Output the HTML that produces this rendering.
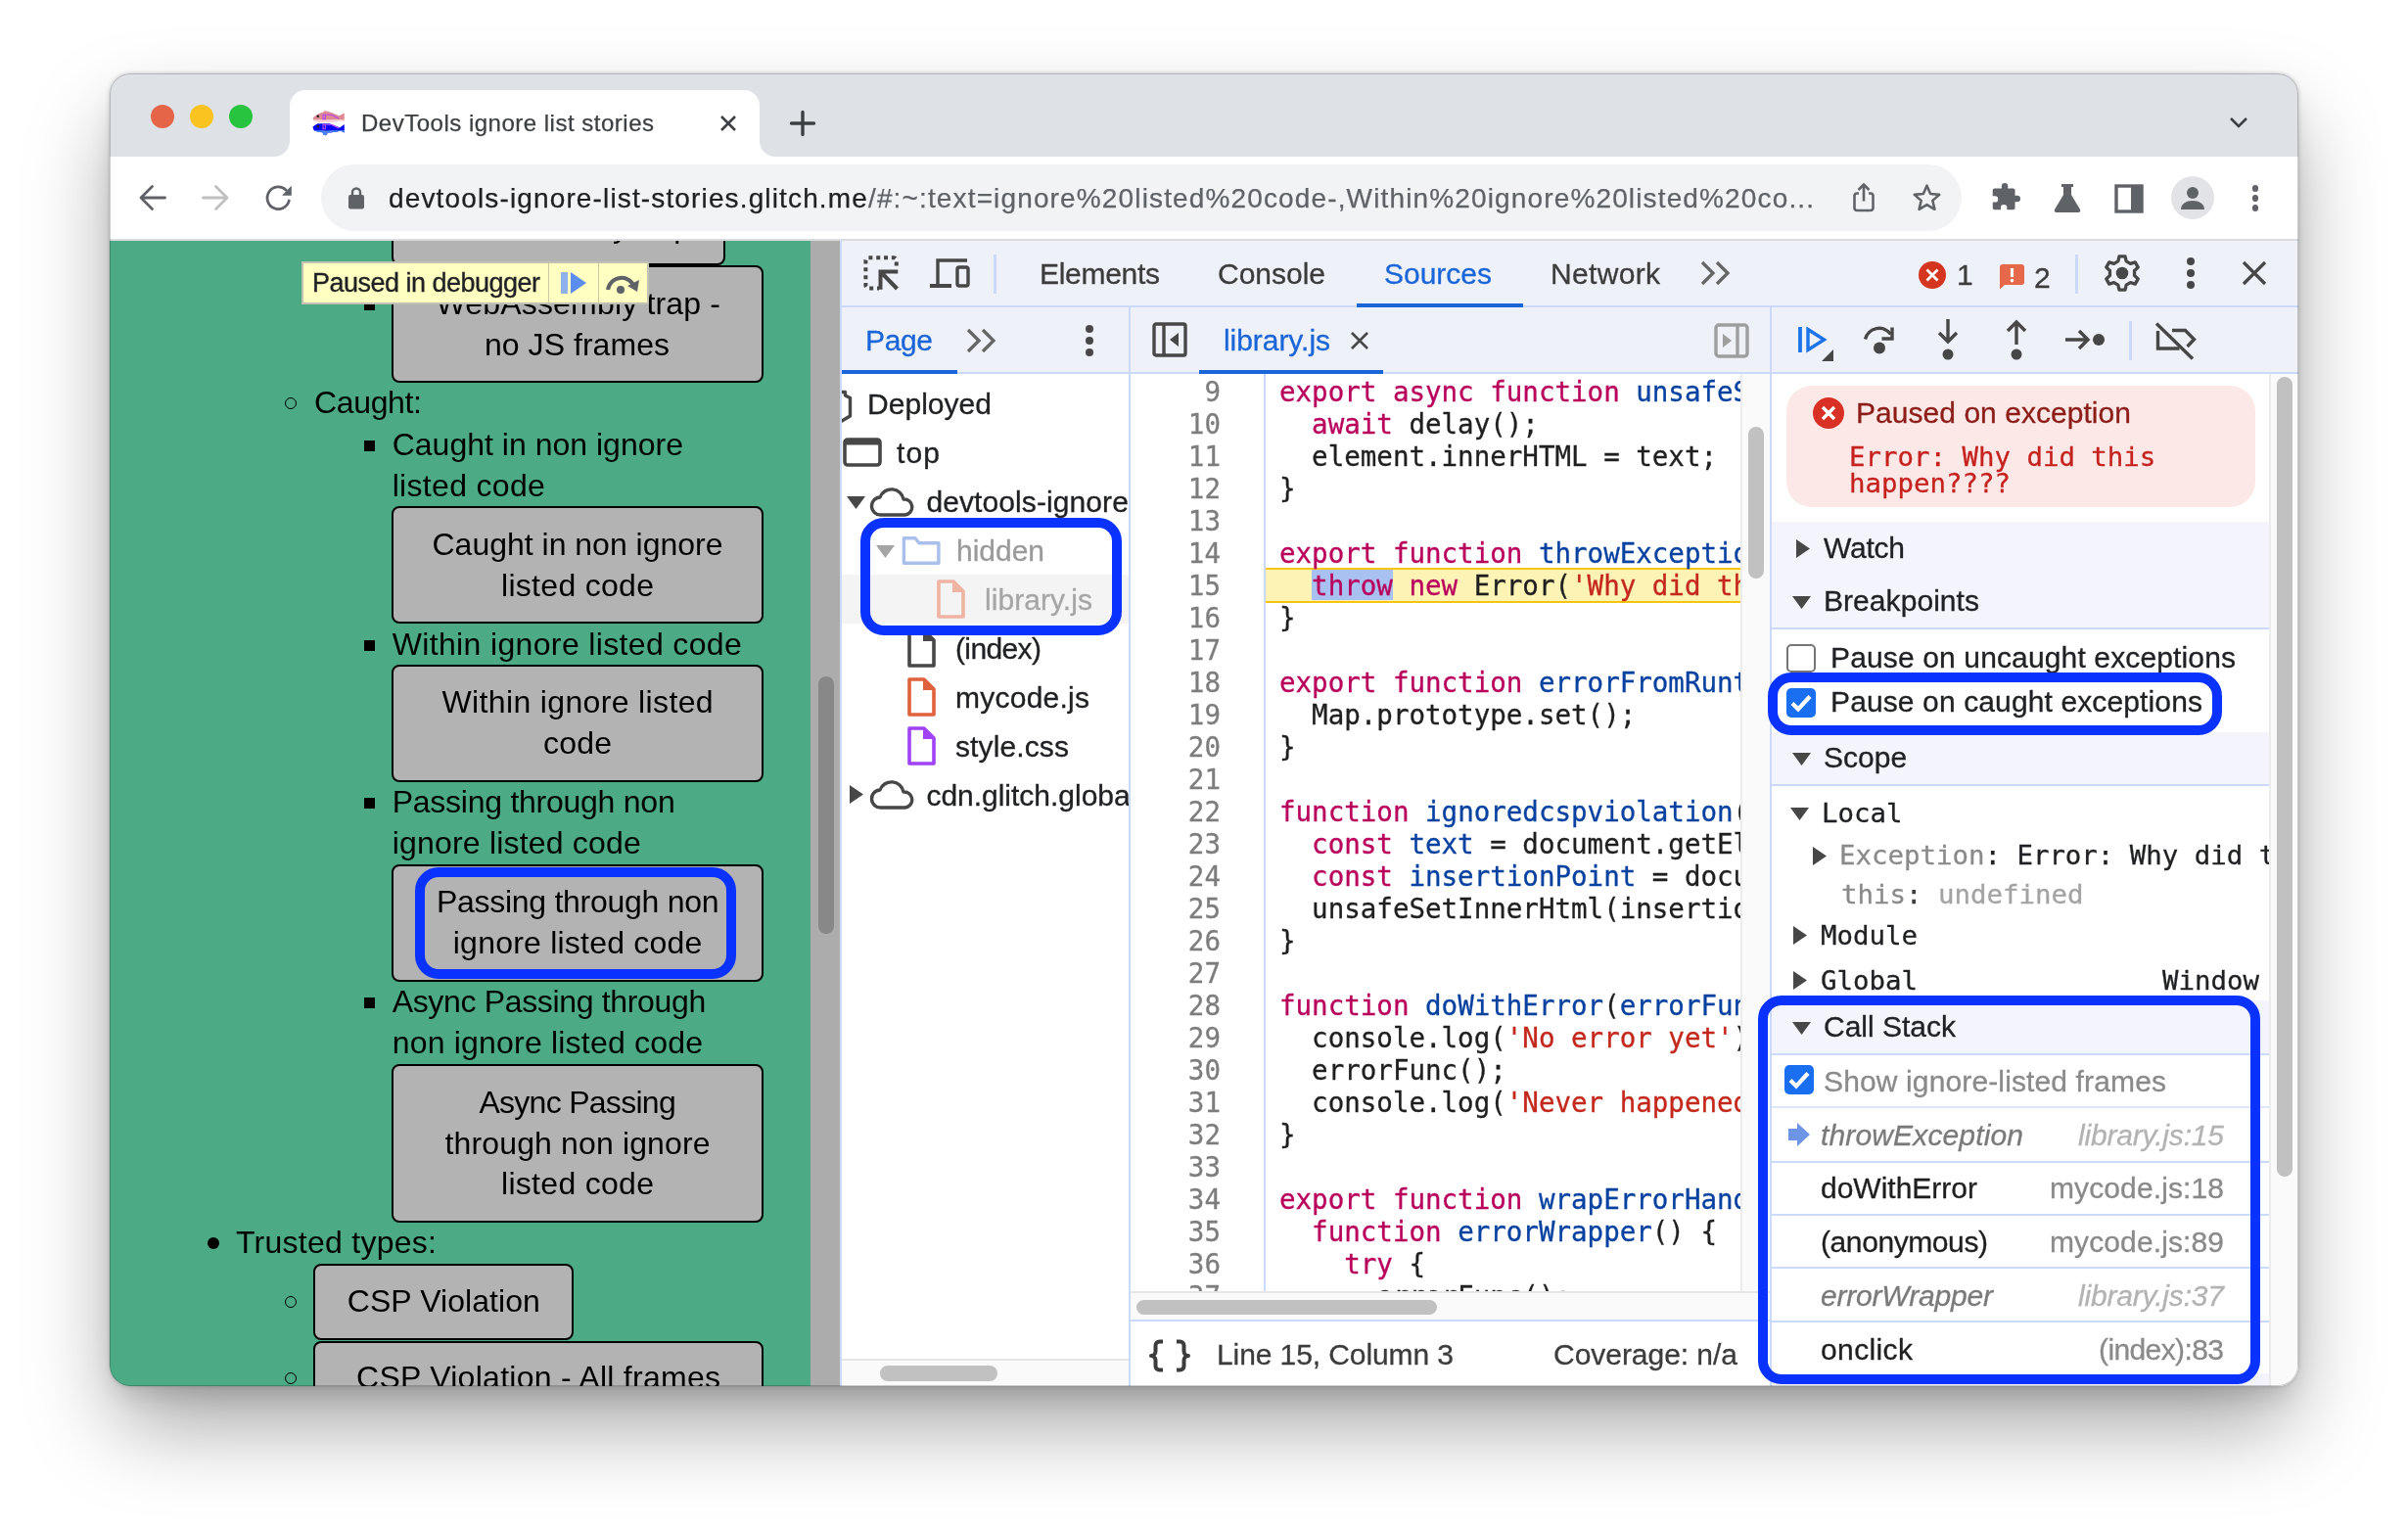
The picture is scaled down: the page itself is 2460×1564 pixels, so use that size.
<!DOCTYPE html>
<html lang="en"><head><meta charset="utf-8"><title>DevTools ignore list stories</title>
<style>
*{box-sizing:border-box;margin:0;padding:0}
html,body{width:2460px;height:1564px;overflow:hidden;background:#fff}
body{position:relative;font-family:"Liberation Sans",sans-serif;}
div,span.t,svg{position:absolute}
span.t{white-space:pre;display:block}
#win{left:112px;top:75px;width:2236px;height:1341px;border-radius:21px;overflow:hidden;background:#fff}
#shadow{left:112px;top:75px;width:2236px;height:1341px;border-radius:21px;
 box-shadow:0 44px 90px -8px rgba(0,0,0,.38),0 14px 26px -6px rgba(0,0,0,.13),0 0 4px rgba(0,0,0,.2)}
#ring{left:112px;top:75px;width:2236px;height:1341px;border-radius:21px;box-shadow:inset 0 0 0 1px rgba(0,0,0,.2)}
#win div,#win span.t,#win svg{position:absolute}
.dt span.t{-webkit-text-stroke:.3px currentColor}
.btn{background:#b3b3b3;border:2px solid #000;border-radius:8px}
.anno{border:10px solid #0a32ff;border-radius:24px}
</style></head><body>
<div id="shadow"></div>
<div id="win">
<div style="left:-112px;top:-75px;width:2460px;height:1564px;will-change:transform">
<div style="left:112px;top:75px;width:2236px;height:85px;background:#dee1e6"></div>
<div style="left:154px;top:107px;width:24px;height:24px;background:#e46548;border-radius:50%"></div>
<div style="left:194px;top:107px;width:24px;height:24px;background:#fbc31f;border-radius:50%"></div>
<div style="left:234px;top:107px;width:24px;height:24px;background:#28c43f;border-radius:50%"></div>
<div style="left:296px;top:92px;width:480px;height:70px;background:#fff;border-radius:16px 16px 0 0"></div>
<svg style="left:280px;top:144px;" width="16" height="16" viewBox="0 0 16 16"><path d="M16 0v16H0A16 16 0 0 0 16 0z" fill="#fff"/></svg>
<svg style="left:776px;top:144px;" width="16" height="16" viewBox="0 0 16 16"><path d="M0 0v16h16A16 16 0 0 1 0 0z" fill="#fff"/></svg>
<svg style="left:319px;top:112px;" width="34" height="28" viewBox="0 0 34 28"><path d="M.5 8.500C4 5 8.500 3.300 11 2.800L12.500 1.200C17 1.500 22 4 27.500 6.200L32.800 3.500V11.500L28 10.500C21 13.500 8 13.800 1.500 11z" fill="#df8a92"/>
<path d="M1 10.300H32.800V12.300L28 11.500C21 13.800 8 13.800 1.500 11z" fill="#f7d3da"/>
<circle cx="5.800" cy="6.800" r="1.300" fill="#1a1a1a"/>
<path d="M11 5.200h2.300v4.600H11zM13.300 5.200h6.200l3 1.500 4.500 2.300" stroke="#b044f4" stroke-width="1.100" fill="none"/>
<path d="M.5 17.500C3 15.500 5 14.500 6 14.200H17C21 15 25 17 28 18.500L32.800 15V23.500L29 21.500C24 23 19 23.500 16 23.500L14 26.200 11.500 25.800 10.500 23.300C7 23 3 22 1.500 21z" fill="#0606f6"/>
<path d="M1.500 21C7 21.500 20 21.500 32.800 21V23.500L29 21.800C24 23 19 23.500 16 23.500L14 26.200 11.500 25.800 10.500 23.300C7 23 3 22.200 1.500 21z" fill="#4f86ee"/>
<circle cx="5.800" cy="17.300" r="1.300" fill="#2a2200"/>
<path d="M11 15.200h2.300v4.600H11zM13.300 15.200h6.200l3 1.500 4.500 2.300" stroke="#c050f0" stroke-width="1.100" fill="none"/></svg>
<span class="t" style="top:110.00px;font-size:24px;line-height:31px;color:#3c4043;letter-spacing:0.502px;left:369.00px;-webkit-text-stroke:.25px currentColor;">DevTools ignore list stories</span>
<svg style="left:732px;top:114px;" width="24" height="24" viewBox="0 0 24 24"><path d="M5 5l14 14M19 5L5 19" stroke="#3c4043" stroke-width="2.6" fill="none"/></svg>
<svg style="left:806px;top:112px;" width="28" height="28" viewBox="0 0 28 28"><path d="M14 2.500v23M2.500 14h23" stroke="#3c4043" stroke-width="3.400" fill="none" stroke-linecap="round"/></svg>
<svg style="left:2276px;top:118px;" width="22" height="14" viewBox="0 0 22 14"><path d="M3 3l8 8 8-8" stroke="#3c4043" stroke-width="2.6" fill="none"/></svg>
<div style="left:112px;top:160px;width:2236px;height:86px;background:#fff;border-bottom:2px solid #dadce0"></div>
<svg style="left:140px;top:186px;" width="32" height="32" viewBox="0 0 32 32"><path d="M28.500 16H5M15.500 4.500L4 16l11.500 11.500" stroke="#5f6368" stroke-width="2.800" fill="none" stroke-linecap="round" stroke-linejoin="round"/></svg>
<svg style="left:204px;top:186px;" width="32" height="32" viewBox="0 0 32 32"><path d="M3.500 16H27M16.500 4.500L28 16 16.500 27.500" stroke="#c0c0c0" stroke-width="2.800" fill="none" stroke-linecap="round" stroke-linejoin="round"/></svg>
<svg style="left:268px;top:186px;" width="34" height="34" viewBox="0 0 34 34"><path d="M27.300 19A11.300 11.300 0 1 1 24.300 8.200" stroke="#5f6368" stroke-width="2.800" fill="none" stroke-linecap="round"/><path d="M29.800 3.800v10H20z" fill="#5f6368"/></svg>
<div style="left:328px;top:168px;width:1676px;height:68px;background:#f1f3f4;border-radius:34px"></div>
<svg style="left:352px;top:188px;" width="24" height="30" viewBox="0 0 24 30"><rect x="4" y="11" width="16" height="14.500" rx="2" fill="#5f6368"/><path d="M8 12V8.500a4 4 0 0 1 8 0V12" stroke="#5f6368" stroke-width="2.400" fill="none"/></svg>
<span class="t" style="top:184.50px;font-size:28px;line-height:36px;color:#5f6368;letter-spacing:1.141px;left:397.00px;-webkit-text-stroke:.25px currentColor;"><span style="color:#202124">devtools-ignore-list-stories.glitch.me</span>/#:~:text=ignore%20listed%20code-,Within%20ignore%20listed%20co...</span>
<svg style="left:1890px;top:184px;" width="28" height="36" viewBox="0 0 28 36"><path d="M9 13.500H7a2.500 2.500 0 0 0-2.500 2.500v12.500A2.500 2.500 0 0 0 7 31h14a2.500 2.500 0 0 0 2.500-2.500V16a2.500 2.500 0 0 0-2.500-2.500h-2" stroke="#5f6368" stroke-width="2.600" fill="none"/><path d="M14 21.500V5M8.500 10l5.500-5.500 5.500 5.500" stroke="#5f6368" stroke-width="2.600" fill="none"/></svg>
<svg style="left:1952.5px;top:186px;" width="31" height="31" viewBox="0 0 34 34"><path d="M17 4l4 9.2 10 .9-7.6 6.6 2.3 9.8L17 25.3 8.3 30.5l2.3-9.8L3 14.1l10-.9z" stroke="#5f6368" stroke-width="2.8" fill="none" stroke-linejoin="round"/></svg>
<svg style="left:2033px;top:186.5px;" width="31" height="31" viewBox="0 0 34 34"><path d="M13 3.5a3.5 3.5 0 0 1 7 0V6h6a2 2 0 0 1 2 2v6h2.5a3.5 3.5 0 0 1 0 7H28v7a2 2 0 0 1-2 2h-7v-2.5a3.5 3.5 0 0 0-7 0V30H5a2 2 0 0 1-2-2v-6.5h2.5a3.5 3.5 0 0 0 0-7H3V8a2 2 0 0 1 2-2h8z" fill="#5f6368"/></svg>
<svg style="left:2096px;top:186px;" width="32" height="34" viewBox="0 0 32 34"><path d="M10 2h12v3h-2v8l9 15a2 2 0 0 1-1.7 3H4.700A2 2 0 0 1 3 28l9-15V5h-2z" fill="#5f6368"/></svg>
<svg style="left:2160px;top:188px;" width="30" height="30" viewBox="0 0 30 30"><rect x="2" y="2" width="26" height="26" stroke="#5f6368" stroke-width="3.4" fill="none"/><rect x="17" y="2" width="11" height="26" fill="#5f6368"/></svg>
<div style="left:2218px;top:180px;width:44px;height:44px;background:#e1e3e6;border-radius:50%"></div>
<svg style="left:2226px;top:188px;" width="28" height="28" viewBox="0 0 28 28"><circle cx="14" cy="9" r="6" fill="#5f6368"/><path d="M2 26c0-6 6-9 12-9s12 3 12 9z" fill="#5f6368"/></svg>
<div style="left:2300.5px;top:189px;width:6.6px;height:6.6px;background:#5f6368;border-radius:50%"></div>
<div style="left:2300.5px;top:199px;width:6.6px;height:6.6px;background:#5f6368;border-radius:50%"></div>
<div style="left:2300.5px;top:209px;width:6.6px;height:6.6px;background:#5f6368;border-radius:50%"></div>
<div style="left:112px;top:246px;width:746px;height:1170px;overflow:hidden"><div style="left:-112px;top:-246px;width:2460px;height:1564px">
<div style="left:112px;top:246px;width:716px;height:1170px;background:#4cab85"></div>
<div class="btn" style="left:400px;top:200px;width:341px;height:71px;"></div>
<span class="t" style="top:210.00px;font-size:32px;line-height:42px;color:#000;left:428.02px;width:287.96px;text-align:center;">WebAssembly trap</span>
<div class="btn" style="left:400px;top:271px;width:380px;height:120px;"></div>
<span class="t" style="top:289.00px;font-size:32px;line-height:42px;color:#000;letter-spacing:0.176px;left:445.50px;">WebAssembly trap -</span>
<span class="t" style="top:331.00px;font-size:32px;line-height:42px;color:#000;letter-spacing:0.044px;left:495.00px;">no JS frames</span>
<div style="left:372px;top:306px;width:11px;height:11px;background:#000"></div>
<div style="left:291px;top:406px;width:12px;height:12px;border:1.5px solid #000;border-radius:50%"></div>
<span class="t" style="top:390.00px;font-size:32px;line-height:42px;color:#000;letter-spacing:-0.347px;left:321.00px;">Caught:</span>
<div style="left:372px;top:450px;width:11px;height:11px;background:#000"></div>
<span class="t" style="top:433.00px;font-size:32px;line-height:42px;color:#000;letter-spacing:0.010px;left:400.70px;">Caught in non ignore</span>
<span class="t" style="top:475.00px;font-size:32px;line-height:42px;color:#000;letter-spacing:0.311px;left:400.70px;">listed code</span>
<div class="btn" style="left:400px;top:517px;width:380px;height:120px;"></div>
<span class="t" style="top:535.00px;font-size:32px;line-height:42px;color:#000;letter-spacing:-0.006px;left:441.50px;">Caught in non ignore</span>
<span class="t" style="top:577.00px;font-size:32px;line-height:42px;color:#000;letter-spacing:0.301px;left:512.00px;">listed code</span>
<div style="left:372px;top:654px;width:11px;height:11px;background:#000"></div>
<span class="t" style="top:637.00px;font-size:32px;line-height:42px;color:#000;letter-spacing:0.353px;left:400.70px;">Within ignore listed code</span>
<div class="btn" style="left:400px;top:679px;width:380px;height:120px;"></div>
<span class="t" style="top:696.00px;font-size:32px;line-height:42px;color:#000;letter-spacing:0.355px;left:451.50px;">Within ignore listed</span>
<span class="t" style="top:738.00px;font-size:32px;line-height:42px;color:#000;letter-spacing:0.203px;left:555.00px;">code</span>
<div style="left:372px;top:815px;width:11px;height:11px;background:#000"></div>
<span class="t" style="top:798.00px;font-size:32px;line-height:42px;color:#000;letter-spacing:-0.253px;left:400.70px;">Passing through non</span>
<span class="t" style="top:840.00px;font-size:32px;line-height:42px;color:#000;letter-spacing:0.192px;left:400.70px;">ignore listed code</span>
<div class="btn" style="left:400px;top:883px;width:380px;height:120px;"></div>
<span class="t" style="top:900.00px;font-size:32px;line-height:42px;color:#000;letter-spacing:-0.281px;left:446.00px;">Passing through non</span>
<span class="t" style="top:942.00px;font-size:32px;line-height:42px;color:#000;letter-spacing:0.216px;left:462.80px;">ignore listed code</span>
<div class="anno" style="left:424px;top:886px;width:328px;height:114px;"></div>
<div style="left:372px;top:1019px;width:11px;height:11px;background:#000"></div>
<span class="t" style="top:1002.00px;font-size:32px;line-height:42px;color:#000;letter-spacing:-0.335px;left:400.70px;">Async Passing through</span>
<span class="t" style="top:1044.00px;font-size:32px;line-height:42px;color:#000;letter-spacing:0.199px;left:400.70px;">non ignore listed code</span>
<div class="btn" style="left:400px;top:1087px;width:380px;height:162px;"></div>
<span class="t" style="top:1105.00px;font-size:32px;line-height:42px;color:#000;letter-spacing:-0.715px;left:489.40px;">Async Passing</span>
<span class="t" style="top:1147.00px;font-size:32px;line-height:42px;color:#000;letter-spacing:0.143px;left:454.50px;">through non ignore</span>
<span class="t" style="top:1188.00px;font-size:32px;line-height:42px;color:#000;letter-spacing:0.301px;left:512.00px;">listed code</span>
<div style="left:212px;top:1264px;width:12px;height:12px;background:#000;border-radius:50%"></div>
<span class="t" style="top:1248.00px;font-size:32px;line-height:42px;color:#000;letter-spacing:0.264px;left:241.00px;">Trusted types:</span>
<div style="left:291px;top:1324px;width:12px;height:12px;border:1.5px solid #000;border-radius:50%"></div>
<div class="btn" style="left:320px;top:1291px;width:266px;height:78px;"></div>
<span class="t" style="top:1308.00px;font-size:32px;line-height:42px;color:#000;letter-spacing:0.059px;left:354.80px;">CSP Violation</span>
<div style="left:291px;top:1402px;width:12px;height:12px;border:1.5px solid #000;border-radius:50%"></div>
<div class="btn" style="left:320px;top:1370px;width:460px;height:80px;"></div>
<span class="t" style="top:1386.00px;font-size:32px;line-height:42px;color:#000;letter-spacing:0.271px;left:364.00px;">CSP Violation - All frames</span>
<div style="left:307.5px;top:266.5px;width:355px;height:44px;background:#ffffc2;border:2px solid #c2c2b4"></div>
<span class="t" style="top:271.50px;font-size:27px;line-height:35px;color:#202124;letter-spacing:-0.512px;left:319.00px;-webkit-text-stroke:.3px currentColor;">Paused in debugger</span>
<div style="left:560px;top:268px;width:1px;height:41px;background:#c9c9a0"></div>
<div style="left:611px;top:268px;width:1px;height:41px;background:#c9c9a0"></div>
<svg style="left:572px;top:276px;" width="28" height="26" viewBox="0 0 28 26"><rect x="1" y="2" width="7" height="22" fill="#8fb2ee"/><path d="M11 2l16 11-16 11z" fill="#5b8def"/></svg>
<svg style="left:617px;top:274px;" width="38" height="28" viewBox="0 0 38 28"><path d="M4 22a14 14 0 0 1 27-3" stroke="#5f6368" stroke-width="4" fill="none"/><path d="M36 12l-2 12-10-6z" fill="#5f6368"/><circle cx="17" cy="22" r="4" fill="#5f6368"/></svg>
<div style="left:828px;top:246px;width:30px;height:1170px;background:#acacac"></div>
<div style="left:836px;top:690.5px;width:16px;height:263px;background:#888;border-radius:8px"></div>
</div></div>
<div class="dt" style="left:0;top:0;width:2460px;height:1564px">
<div style="left:858px;top:246px;width:1490px;height:1170px;background:#fff"></div>
<div style="left:858px;top:246px;width:2px;height:1170px;background:#cbdafa"></div>
<div style="left:860px;top:246px;width:1488px;height:68px;background:#eff1f9;border-bottom:2px solid #cbdafa"></div>
<svg style="left:880px;top:259px;" width="40" height="40" viewBox="0 0 40 40"><path d="M18 35.500H7.400a3 3 0 0 1-3-3V7.300a3 3 0 0 1 3-3H32.800a3 3 0 0 1 3 3V16" stroke="#474747" stroke-width="4" fill="none" stroke-dasharray="4 3.830" stroke-dashoffset="2"/><path d="M20 19l16.500 17M19.500 36.700V18.400h17.800" stroke="#474747" stroke-width="4" fill="none"/></svg>
<svg style="left:950px;top:261px;" width="42" height="36" viewBox="0 0 42 36"><path d="M8 30V5h30" stroke="#474747" stroke-width="3.4" fill="none"/><path d="M0 31h22" stroke="#474747" stroke-width="4" fill="none"/><rect x="28" y="12" width="11" height="19" rx="2" stroke="#474747" stroke-width="3.4" fill="none"/></svg>
<div style="left:1015px;top:260px;width:3px;height:40px;background:#cbdafa"></div>
<span class="t" style="top:259.50px;font-size:30px;line-height:39px;color:#3c3c3c;letter-spacing:-0.294px;left:1062.00px;">Elements</span>
<span class="t" style="top:259.50px;font-size:30px;line-height:39px;color:#3c3c3c;letter-spacing:-0.012px;left:1244.00px;">Console</span>
<span class="t" style="top:259.50px;font-size:30px;line-height:39px;color:#1a66d8;letter-spacing:-0.010px;left:1414.00px;">Sources</span>
<div style="left:1386px;top:310px;width:170px;height:4px;background:#1a66d8"></div>
<span class="t" style="top:259.50px;font-size:30px;line-height:39px;color:#3c3c3c;letter-spacing:0.329px;left:1584.00px;">Network</span>
<svg style="left:1736px;top:265px;" width="34" height="28" viewBox="0 0 34 28"><path d="M3 3l11 11L3 25M18 3l11 11-11 11" stroke="#666" stroke-width="3.300" fill="none"/></svg>
<div style="left:1959.5px;top:266.5px;width:28px;height:28px;background:#d4351f;border-radius:50%"></div>
<svg style="left:1959.5px;top:266.5px;" width="28" height="28" viewBox="0 0 28 28"><path d="M8.500 8.500l11 11M19.500 8.500l-11 11" stroke="#fff" stroke-width="2.800" fill="none"/></svg>
<span class="t" style="top:260.70px;font-size:30px;line-height:39px;color:#3c3c3c;left:1999.00px;">1</span>
<svg style="left:2042px;top:268px;" width="28" height="30" viewBox="0 0 28 30"><path d="M4 2h19a3 3 0 0 1 3 3v15a3 3 0 0 1-3 3H6l-5 4.500V5a3 3 0 0 1 3-3z" fill="#e46849"/><path d="M13.500 6v9" stroke="#fff" stroke-width="3.200"/><circle cx="13.500" cy="18.600" r="1.800" fill="#fff"/></svg>
<span class="t" style="top:264.00px;font-size:30px;line-height:39px;color:#3c3c3c;left:2078.00px;">2</span>
<div style="left:2120px;top:260px;width:3px;height:40px;background:#cbdafa"></div>
<svg style="left:2148px;top:259px;" width="40" height="40" viewBox="0 0 40 40"><g transform="translate(20 20)"><path d="M-4.17 -12.10 L-3.00 -17.04 L3.00 -17.04 L4.17 -12.10 L8.40 -9.66 L13.25 -11.12 L16.26 -5.92 L12.56 -2.44 L12.56 2.44 L16.26 5.92 L13.25 11.12 L8.40 9.66 L4.17 12.10 L3.00 17.04 L-3.00 17.04 L-4.17 12.10 L-8.40 9.66 L-13.25 11.12 L-16.26 5.92 L-12.56 2.44 L-12.56 -2.44 L-16.26 -5.92 L-13.25 -11.12 L-8.40 -9.66z" stroke="#474747" stroke-width="3.300" fill="none" stroke-linejoin="round"/><circle r="6.300" fill="#474747"/></g></svg>
<div style="left:2234px;top:263px;width:8px;height:8px;background:#474747;border-radius:50%"></div>
<div style="left:2234px;top:275px;width:8px;height:8px;background:#474747;border-radius:50%"></div>
<div style="left:2234px;top:287px;width:8px;height:8px;background:#474747;border-radius:50%"></div>
<svg style="left:2289px;top:265px;" width="28" height="28" viewBox="0 0 28 28"><path d="M3 3l22 22M25 3L3 25" stroke="#474747" stroke-width="3.2" fill="none"/></svg>
<div style="left:860px;top:314px;width:1488px;height:68px;background:#eff1f9;border-bottom:2px solid #cbdafa"></div>
<span class="t" style="top:327.50px;font-size:30px;line-height:39px;color:#1a66d8;letter-spacing:-0.355px;left:884.00px;">Page</span>
<div style="left:860px;top:378px;width:118px;height:4px;background:#1a66d8"></div>
<svg style="left:986px;top:334px;" width="34" height="28" viewBox="0 0 34 28"><path d="M3 3l11 11L3 25M18 3l11 11-11 11" stroke="#666" stroke-width="3.300" fill="none"/></svg>
<div style="left:1109px;top:332px;width:8px;height:8px;background:#474747;border-radius:50%"></div>
<div style="left:1109px;top:344px;width:8px;height:8px;background:#474747;border-radius:50%"></div>
<div style="left:1109px;top:356px;width:8px;height:8px;background:#474747;border-radius:50%"></div>
<div style="left:1153px;top:314px;width:2px;height:1102px;background:#cbdafa"></div>
<svg style="left:1177px;top:329px;" width="36" height="36" viewBox="0 0 36 36"><rect x="2" y="2" width="32" height="32" rx="2" stroke="#474747" stroke-width="3.4" fill="none"/><path d="M12 2v32" stroke="#474747" stroke-width="3.4"/><path d="M27 11v14l-9-7z" fill="#474747"/></svg>
<span class="t" style="top:327.50px;font-size:30px;line-height:39px;color:#1a66d8;letter-spacing:-0.051px;left:1250.00px;">library.js</span>
<svg style="left:1378px;top:337px;" width="22" height="22" viewBox="0 0 22 22"><path d="M3 3l16 16M19 3L3 19" stroke="#474747" stroke-width="2.6" fill="none"/></svg>
<div style="left:1225px;top:378px;width:188px;height:4px;background:#1a66d8"></div>
<svg style="left:1750.5px;top:329.5px;" width="36" height="36" viewBox="0 0 36 36"><rect x="2" y="2" width="32" height="32" rx="3" stroke="#9e9e9e" stroke-width="3.400" fill="none"/><path d="M24 2v32" stroke="#9e9e9e" stroke-width="3.400"/><path d="M9 11v14l9-7z" fill="#9e9e9e"/></svg>
<div style="left:1808px;top:314px;width:2px;height:1102px;background:#cbdafa"></div>
<svg style="left:1834px;top:328px;" width="42" height="42" viewBox="0 0 42 42"><path d="M5 6v26" stroke="#1a73e8" stroke-width="3.800"/><path d="M13 8.500l16.500 10.500L13 29.500z" stroke="#1a73e8" stroke-width="3.400" fill="none" stroke-linejoin="miter"/><path d="M39 29v12H27z" fill="#474747"/></svg>
<svg style="left:1902px;top:328px;" width="40" height="40" viewBox="0 0 40 40"><path d="M3.500 18.500a14.500 14.500 0 0 1 26-5" stroke="#474747" stroke-width="3.400" fill="none"/><path d="M31 6.500v11.500H20.500" stroke="#474747" stroke-width="3.400" fill="none"/><circle cx="18" cy="27.600" r="6" fill="#474747"/></svg>
<svg style="left:1974px;top:324px;" width="32" height="46" viewBox="0 0 32 46"><path d="M16 2v22M7 16l9 9 9-9" stroke="#474747" stroke-width="3.4" fill="none"/><circle cx="16" cy="38" r="5.500" fill="#474747"/></svg>
<svg style="left:2044px;top:324px;" width="32" height="46" viewBox="0 0 32 46"><path d="M16 28V6M7 14l9-9 9 9" stroke="#474747" stroke-width="3.4" fill="none"/><circle cx="16" cy="38" r="5.500" fill="#474747"/></svg>
<svg style="left:2108px;top:332px;" width="46" height="32" viewBox="0 0 46 32"><path d="M2 15h22M16 6l9 9-9 9" stroke="#474747" stroke-width="3.4" fill="none"/><circle cx="36" cy="15" r="6" fill="#474747"/></svg>
<div style="left:2175px;top:328px;width:3px;height:40px;background:#cbdafa"></div>
<svg style="left:2198px;top:328px;" width="46" height="40" viewBox="0 0 46 40"><path d="M21 9.500h13.500l9 9.300-7 7.200M6.500 10v18h22" stroke="#474747" stroke-width="3.400" fill="none" stroke-linejoin="miter"/><path d="M5 2.500l37 36" stroke="#474747" stroke-width="3.400"/></svg>
<div style="left:860px;top:382px;width:293px;height:1034px;overflow:hidden"><div style="left:-860px;top:-382px;width:2460px;height:1564px">
<div style="left:860px;top:587px;width:293px;height:50px;background:#f4f4f4"></div>
<svg style="left:850px;top:394px;" width="22" height="40" viewBox="0 0 22 40"><path d="M8 6.500h5.500V10l5 2.500V31l-10 6" stroke="#474747" stroke-width="3.400" fill="none" stroke-linejoin="round"/></svg>
<span class="t" style="top:392.80px;font-size:30.001px;line-height:39px;color:#202124;letter-spacing:0.034px;left:886.00px;">Deployed</span>
<svg style="left:861px;top:447px;" width="40" height="30" viewBox="0 0 40 30"><rect x="2" y="2" width="36" height="26" rx="3" stroke="#474747" stroke-width="3.6" fill="none"/><path d="M2 5h36" stroke="#474747" stroke-width="5"/></svg>
<span class="t" style="top:442.80px;font-size:30.001px;line-height:39px;color:#202124;letter-spacing:1.147px;left:916.00px;">top</span>
<svg style="left:865px;top:506.5px;" width="19" height="13" viewBox="0 0 19 13"><path d="M0 0h19l-9.5 13z" fill="#474747"/></svg>
<svg style="left:888px;top:497px;" width="48" height="32" viewBox="0 0 48 32"><path d="M12 29a9 9 0 0 1-1-18 12.500 12.500 0 0 1 24 2 8 8 0 0 1 1.500 16z" stroke="#474747" stroke-width="3.4" fill="none" stroke-linejoin="round"/></svg>
<span class="t" style="top:492.80px;font-size:30.001px;line-height:39px;color:#202124;letter-spacing:0.098px;left:946.40px;">devtools-ignore-list-stories.glitch.me</span>
<svg style="left:895px;top:556.5px;" width="19" height="13" viewBox="0 0 19 13"><path d="M0 0h19l-9.5 13z" fill="#a5a5a5"/></svg>
<svg style="left:920px;top:545.5px;" width="42" height="34" viewBox="0 0 42 34"><path d="M3.400 3.700h11.500l4 5h20v20.500H3.400z" stroke="#a9c0ec" stroke-width="3.400" fill="#fff" stroke-linejoin="round"/></svg>
<span class="t" style="top:542.80px;font-size:30.001px;line-height:39px;color:#9a9a9a;letter-spacing:-0.019px;left:977.00px;">hidden</span>
<svg style="left:956px;top:592.3px;opacity:1" width="30" height="40" viewBox="0 0 30 40"><path d="M3 2h15l10 10v26H3z" stroke="#f0b4a4" stroke-width="3.6" fill="none" stroke-linejoin="round"/><path d="M17 2v11h11z" fill="#f0b4a4"/></svg>
<span class="t" style="top:592.80px;font-size:30.001px;line-height:39px;color:#a6a6a6;letter-spacing:0.060px;left:1006.00px;">library.js</span>
<svg style="left:926px;top:642.3px;opacity:1" width="30" height="40" viewBox="0 0 30 40"><path d="M3 2h15l10 10v26H3z" stroke="#474747" stroke-width="3.6" fill="none" stroke-linejoin="round"/><path d="M17 2v11h11z" fill="#474747"/></svg>
<span class="t" style="top:642.80px;font-size:30.001px;line-height:39px;color:#202124;letter-spacing:-0.618px;left:976.00px;">(index)</span>
<svg style="left:926px;top:692.3px;opacity:1" width="30" height="40" viewBox="0 0 30 40"><path d="M3 2h15l10 10v26H3z" stroke="#e0623c" stroke-width="3.6" fill="none" stroke-linejoin="round"/><path d="M17 2v11h11z" fill="#e0623c"/></svg>
<span class="t" style="top:692.80px;font-size:30.001px;line-height:39px;color:#202124;letter-spacing:0.244px;left:976.00px;">mycode.js</span>
<svg style="left:926px;top:742.3px;opacity:1" width="30" height="40" viewBox="0 0 30 40"><path d="M3 2h15l10 10v26H3z" stroke="#a142f4" stroke-width="3.6" fill="none" stroke-linejoin="round"/><path d="M17 2v11h11z" fill="#a142f4"/></svg>
<span class="t" style="top:742.80px;font-size:30.001px;line-height:39px;color:#202124;letter-spacing:0.122px;left:976.00px;">style.css</span>
<svg style="left:868px;top:801.8px;" width="14" height="19" viewBox="0 0 14 19"><path d="M0 0l14 9.5L0 19z" fill="#474747"/></svg>
<svg style="left:888px;top:796px;" width="48" height="32" viewBox="0 0 48 32"><path d="M12 29a9 9 0 0 1-1-18 12.500 12.500 0 0 1 24 2 8 8 0 0 1 1.500 16z" stroke="#474747" stroke-width="3.4" fill="none" stroke-linejoin="round"/></svg>
<span class="t" style="top:792.80px;font-size:30.001px;line-height:39px;color:#202124;letter-spacing:-0.013px;left:946.40px;">cdn.glitch.global</span>
<div style="left:860px;top:1388px;width:293px;height:28px;background:#fafafa;border-top:2px solid #e6e6e6"></div>
<div style="left:899px;top:1395px;width:120px;height:16px;background:#c1c1c1;border-radius:8px"></div>
</div></div>
<div class="anno" style="left:879px;top:529px;width:267px;height:120px;"></div>
<div style="left:1291px;top:382px;width:2px;height:937px;background:#cbdafa"></div>
<div style="left:1293px;top:579.5px;width:485px;height:36.5px;background:#fdf3b4;border-top:2px solid #f9c513;border-bottom:2px solid #f9c513"></div>
<div style="left:1340px;top:581.5px;width:83px;height:31px;background:#a8c1f0"></div>
<div style="left:1155px;top:382px;width:623px;height:937px;overflow:hidden"><div style="left:-1155px;top:-382px;width:2460px;height:1564px">
<span class="t" style="top:382.30px;font-size:27.5px;line-height:36px;color:#7d7d7d;font-family:'DejaVu Sans Mono','Liberation Mono',monospace;left:1210.44px;width:36.56px;text-align:right;">9</span>
<span class="t" style="top:382.30px;font-size:27.5px;line-height:36px;color:#1f1f1f;font-family:'DejaVu Sans Mono','Liberation Mono',monospace;left:1307.00px;"><span style="color:#b8005c">export async function </span><span style="color:#0842a0">unsafeSetInnerHtml</span><span style="color:#1f1f1f">(element, text) {</span></span>
<span class="t" style="top:415.30px;font-size:27.5px;line-height:36px;color:#7d7d7d;font-family:'DejaVu Sans Mono','Liberation Mono',monospace;left:1193.89px;width:53.11px;text-align:right;">10</span>
<span class="t" style="top:415.30px;font-size:27.5px;line-height:36px;color:#1f1f1f;font-family:'DejaVu Sans Mono','Liberation Mono',monospace;left:1307.00px;"><span style="color:#b8005c">  await </span><span style="color:#1f1f1f">delay();</span></span>
<span class="t" style="top:448.30px;font-size:27.5px;line-height:36px;color:#7d7d7d;font-family:'DejaVu Sans Mono','Liberation Mono',monospace;left:1193.89px;width:53.11px;text-align:right;">11</span>
<span class="t" style="top:448.30px;font-size:27.5px;line-height:36px;color:#1f1f1f;font-family:'DejaVu Sans Mono','Liberation Mono',monospace;left:1307.00px;"><span style="color:#1f1f1f">  element.innerHTML = text;</span></span>
<span class="t" style="top:481.30px;font-size:27.5px;line-height:36px;color:#7d7d7d;font-family:'DejaVu Sans Mono','Liberation Mono',monospace;left:1193.89px;width:53.11px;text-align:right;">12</span>
<span class="t" style="top:481.30px;font-size:27.5px;line-height:36px;color:#1f1f1f;font-family:'DejaVu Sans Mono','Liberation Mono',monospace;left:1307.00px;"><span style="color:#1f1f1f">}</span></span>
<span class="t" style="top:514.30px;font-size:27.5px;line-height:36px;color:#7d7d7d;font-family:'DejaVu Sans Mono','Liberation Mono',monospace;left:1193.89px;width:53.11px;text-align:right;">13</span>
<span class="t" style="top:547.30px;font-size:27.5px;line-height:36px;color:#7d7d7d;font-family:'DejaVu Sans Mono','Liberation Mono',monospace;left:1193.89px;width:53.11px;text-align:right;">14</span>
<span class="t" style="top:547.30px;font-size:27.5px;line-height:36px;color:#1f1f1f;font-family:'DejaVu Sans Mono','Liberation Mono',monospace;left:1307.00px;"><span style="color:#b8005c">export function </span><span style="color:#0842a0">throwException</span><span style="color:#1f1f1f">() {</span></span>
<span class="t" style="top:580.30px;font-size:27.5px;line-height:36px;color:#7d7d7d;font-family:'DejaVu Sans Mono','Liberation Mono',monospace;left:1193.89px;width:53.11px;text-align:right;">15</span>
<span class="t" style="top:580.30px;font-size:27.5px;line-height:36px;color:#1f1f1f;font-family:'DejaVu Sans Mono','Liberation Mono',monospace;left:1307.00px;"><span style="color:#b8005c">  throw new </span><span style="color:#1f1f1f">Error(</span><span style="color:#c4281c">'Why did this happen????'</span><span style="color:#1f1f1f">);</span></span>
<span class="t" style="top:613.30px;font-size:27.5px;line-height:36px;color:#7d7d7d;font-family:'DejaVu Sans Mono','Liberation Mono',monospace;left:1193.89px;width:53.11px;text-align:right;">16</span>
<span class="t" style="top:613.30px;font-size:27.5px;line-height:36px;color:#1f1f1f;font-family:'DejaVu Sans Mono','Liberation Mono',monospace;left:1307.00px;"><span style="color:#1f1f1f">}</span></span>
<span class="t" style="top:646.30px;font-size:27.5px;line-height:36px;color:#7d7d7d;font-family:'DejaVu Sans Mono','Liberation Mono',monospace;left:1193.89px;width:53.11px;text-align:right;">17</span>
<span class="t" style="top:679.30px;font-size:27.5px;line-height:36px;color:#7d7d7d;font-family:'DejaVu Sans Mono','Liberation Mono',monospace;left:1193.89px;width:53.11px;text-align:right;">18</span>
<span class="t" style="top:679.30px;font-size:27.5px;line-height:36px;color:#1f1f1f;font-family:'DejaVu Sans Mono','Liberation Mono',monospace;left:1307.00px;"><span style="color:#b8005c">export function </span><span style="color:#0842a0">errorFromRuntime</span><span style="color:#1f1f1f">() {</span></span>
<span class="t" style="top:712.30px;font-size:27.5px;line-height:36px;color:#7d7d7d;font-family:'DejaVu Sans Mono','Liberation Mono',monospace;left:1193.89px;width:53.11px;text-align:right;">19</span>
<span class="t" style="top:712.30px;font-size:27.5px;line-height:36px;color:#1f1f1f;font-family:'DejaVu Sans Mono','Liberation Mono',monospace;left:1307.00px;"><span style="color:#1f1f1f">  Map.prototype.set();</span></span>
<span class="t" style="top:745.30px;font-size:27.5px;line-height:36px;color:#7d7d7d;font-family:'DejaVu Sans Mono','Liberation Mono',monospace;left:1193.89px;width:53.11px;text-align:right;">20</span>
<span class="t" style="top:745.30px;font-size:27.5px;line-height:36px;color:#1f1f1f;font-family:'DejaVu Sans Mono','Liberation Mono',monospace;left:1307.00px;"><span style="color:#1f1f1f">}</span></span>
<span class="t" style="top:778.30px;font-size:27.5px;line-height:36px;color:#7d7d7d;font-family:'DejaVu Sans Mono','Liberation Mono',monospace;left:1193.89px;width:53.11px;text-align:right;">21</span>
<span class="t" style="top:811.30px;font-size:27.5px;line-height:36px;color:#7d7d7d;font-family:'DejaVu Sans Mono','Liberation Mono',monospace;left:1193.89px;width:53.11px;text-align:right;">22</span>
<span class="t" style="top:811.30px;font-size:27.5px;line-height:36px;color:#1f1f1f;font-family:'DejaVu Sans Mono','Liberation Mono',monospace;left:1307.00px;"><span style="color:#b8005c">function </span><span style="color:#0842a0">ignoredcspviolation</span><span style="color:#1f1f1f">() {</span></span>
<span class="t" style="top:844.30px;font-size:27.5px;line-height:36px;color:#7d7d7d;font-family:'DejaVu Sans Mono','Liberation Mono',monospace;left:1193.89px;width:53.11px;text-align:right;">23</span>
<span class="t" style="top:844.30px;font-size:27.5px;line-height:36px;color:#1f1f1f;font-family:'DejaVu Sans Mono','Liberation Mono',monospace;left:1307.00px;"><span style="color:#b8005c">  const </span><span style="color:#0842a0">text</span><span style="color:#1f1f1f"> = document.getElementById('text').value;</span></span>
<span class="t" style="top:877.30px;font-size:27.5px;line-height:36px;color:#7d7d7d;font-family:'DejaVu Sans Mono','Liberation Mono',monospace;left:1193.89px;width:53.11px;text-align:right;">24</span>
<span class="t" style="top:877.30px;font-size:27.5px;line-height:36px;color:#1f1f1f;font-family:'DejaVu Sans Mono','Liberation Mono',monospace;left:1307.00px;"><span style="color:#b8005c">  const </span><span style="color:#0842a0">insertionPoint</span><span style="color:#1f1f1f"> = document.getElementById('insertion-point');</span></span>
<span class="t" style="top:910.30px;font-size:27.5px;line-height:36px;color:#7d7d7d;font-family:'DejaVu Sans Mono','Liberation Mono',monospace;left:1193.89px;width:53.11px;text-align:right;">25</span>
<span class="t" style="top:910.30px;font-size:27.5px;line-height:36px;color:#1f1f1f;font-family:'DejaVu Sans Mono','Liberation Mono',monospace;left:1307.00px;"><span style="color:#1f1f1f">  unsafeSetInnerHtml(insertionPoint, text);</span></span>
<span class="t" style="top:943.30px;font-size:27.5px;line-height:36px;color:#7d7d7d;font-family:'DejaVu Sans Mono','Liberation Mono',monospace;left:1193.89px;width:53.11px;text-align:right;">26</span>
<span class="t" style="top:943.30px;font-size:27.5px;line-height:36px;color:#1f1f1f;font-family:'DejaVu Sans Mono','Liberation Mono',monospace;left:1307.00px;"><span style="color:#1f1f1f">}</span></span>
<span class="t" style="top:976.30px;font-size:27.5px;line-height:36px;color:#7d7d7d;font-family:'DejaVu Sans Mono','Liberation Mono',monospace;left:1193.89px;width:53.11px;text-align:right;">27</span>
<span class="t" style="top:1009.30px;font-size:27.5px;line-height:36px;color:#7d7d7d;font-family:'DejaVu Sans Mono','Liberation Mono',monospace;left:1193.89px;width:53.11px;text-align:right;">28</span>
<span class="t" style="top:1009.30px;font-size:27.5px;line-height:36px;color:#1f1f1f;font-family:'DejaVu Sans Mono','Liberation Mono',monospace;left:1307.00px;"><span style="color:#b8005c">function </span><span style="color:#0842a0">doWithError</span><span style="color:#1f1f1f">(</span><span style="color:#0842a0">errorFunc</span><span style="color:#1f1f1f">) {</span></span>
<span class="t" style="top:1042.30px;font-size:27.5px;line-height:36px;color:#7d7d7d;font-family:'DejaVu Sans Mono','Liberation Mono',monospace;left:1193.89px;width:53.11px;text-align:right;">29</span>
<span class="t" style="top:1042.30px;font-size:27.5px;line-height:36px;color:#1f1f1f;font-family:'DejaVu Sans Mono','Liberation Mono',monospace;left:1307.00px;"><span style="color:#1f1f1f">  console.log(</span><span style="color:#c4281c">'No error yet'</span><span style="color:#1f1f1f">);</span></span>
<span class="t" style="top:1075.30px;font-size:27.5px;line-height:36px;color:#7d7d7d;font-family:'DejaVu Sans Mono','Liberation Mono',monospace;left:1193.89px;width:53.11px;text-align:right;">30</span>
<span class="t" style="top:1075.30px;font-size:27.5px;line-height:36px;color:#1f1f1f;font-family:'DejaVu Sans Mono','Liberation Mono',monospace;left:1307.00px;"><span style="color:#1f1f1f">  errorFunc();</span></span>
<span class="t" style="top:1108.30px;font-size:27.5px;line-height:36px;color:#7d7d7d;font-family:'DejaVu Sans Mono','Liberation Mono',monospace;left:1193.89px;width:53.11px;text-align:right;">31</span>
<span class="t" style="top:1108.30px;font-size:27.5px;line-height:36px;color:#1f1f1f;font-family:'DejaVu Sans Mono','Liberation Mono',monospace;left:1307.00px;"><span style="color:#1f1f1f">  console.log(</span><span style="color:#c4281c">'Never happened'</span><span style="color:#1f1f1f">);</span></span>
<span class="t" style="top:1141.30px;font-size:27.5px;line-height:36px;color:#7d7d7d;font-family:'DejaVu Sans Mono','Liberation Mono',monospace;left:1193.89px;width:53.11px;text-align:right;">32</span>
<span class="t" style="top:1141.30px;font-size:27.5px;line-height:36px;color:#1f1f1f;font-family:'DejaVu Sans Mono','Liberation Mono',monospace;left:1307.00px;"><span style="color:#1f1f1f">}</span></span>
<span class="t" style="top:1174.30px;font-size:27.5px;line-height:36px;color:#7d7d7d;font-family:'DejaVu Sans Mono','Liberation Mono',monospace;left:1193.89px;width:53.11px;text-align:right;">33</span>
<span class="t" style="top:1207.30px;font-size:27.5px;line-height:36px;color:#7d7d7d;font-family:'DejaVu Sans Mono','Liberation Mono',monospace;left:1193.89px;width:53.11px;text-align:right;">34</span>
<span class="t" style="top:1207.30px;font-size:27.5px;line-height:36px;color:#1f1f1f;font-family:'DejaVu Sans Mono','Liberation Mono',monospace;left:1307.00px;"><span style="color:#b8005c">export function </span><span style="color:#0842a0">wrapErrorHandler</span><span style="color:#1f1f1f">(</span><span style="color:#0842a0">errorFunc</span><span style="color:#1f1f1f">) {</span></span>
<span class="t" style="top:1240.30px;font-size:27.5px;line-height:36px;color:#7d7d7d;font-family:'DejaVu Sans Mono','Liberation Mono',monospace;left:1193.89px;width:53.11px;text-align:right;">35</span>
<span class="t" style="top:1240.30px;font-size:27.5px;line-height:36px;color:#1f1f1f;font-family:'DejaVu Sans Mono','Liberation Mono',monospace;left:1307.00px;"><span style="color:#b8005c">  function </span><span style="color:#0842a0">errorWrapper</span><span style="color:#1f1f1f">() {</span></span>
<span class="t" style="top:1273.30px;font-size:27.5px;line-height:36px;color:#7d7d7d;font-family:'DejaVu Sans Mono','Liberation Mono',monospace;left:1193.89px;width:53.11px;text-align:right;">36</span>
<span class="t" style="top:1273.30px;font-size:27.5px;line-height:36px;color:#1f1f1f;font-family:'DejaVu Sans Mono','Liberation Mono',monospace;left:1307.00px;"><span style="color:#b8005c">    try </span><span style="color:#1f1f1f">{</span></span>
<span class="t" style="top:1306.30px;font-size:27.5px;line-height:36px;color:#7d7d7d;font-family:'DejaVu Sans Mono','Liberation Mono',monospace;left:1193.89px;width:53.11px;text-align:right;">37</span>
<span class="t" style="top:1306.30px;font-size:27.5px;line-height:36px;color:#1f1f1f;font-family:'DejaVu Sans Mono','Liberation Mono',monospace;left:1307.00px;"><span style="color:#1f1f1f">      errorFunc();</span></span>
</div></div>
<div style="left:1778px;top:382px;width:30px;height:937px;background:#fafafa;border-left:2px solid #ececec"></div>
<div style="left:1786px;top:436px;width:16px;height:155px;background:#c1c1c1;border-radius:8px"></div>
<div style="left:1155px;top:1319px;width:653px;height:31px;background:#fafafa;border-top:2px solid #e6e6e6;border-bottom:2px solid #cbdafa"></div>
<div style="left:1161px;top:1328px;width:307px;height:15px;background:#c1c1c1;border-radius:8px"></div>
<div style="left:1155px;top:1350px;width:653px;height:66px;background:#fff"></div>
<svg style="left:1172px;top:1366px;" width="48" height="38" viewBox="0 0 48 38"><path d="M16 4.500h-3.500a4 4 0 0 0-4 4v6a4.500 4.500 0 0 1-4.500 4.500 4.500 4.500 0 0 1 4.500 4.500v6a4 4 0 0 0 4 4H16M30 4.500h3.500a4 4 0 0 1 4 4v6a4.500 4.500 0 0 0 4.500 4.500 4.500 4.500 0 0 0-4.500 4.500v6a4 4 0 0 1-4 4H30" stroke="#3c3c3c" stroke-width="4" fill="none" stroke-linejoin="round"/></svg>
<span class="t" style="top:1363.50px;font-size:30px;line-height:39px;color:#3c3c3c;letter-spacing:-0.093px;left:1243.00px;">Line 15, Column 3</span>
<span class="t" style="top:1363.50px;font-size:30px;line-height:39px;color:#3c3c3c;letter-spacing:-0.038px;left:1587.00px;">Coverage: n/a</span>
<div style="left:1825px;top:394px;width:479px;height:124px;background:#fce8e6;border-radius:26px"></div>
<div style="left:1852px;top:406px;width:32px;height:32px;background:#d93025;border-radius:50%"></div>
<svg style="left:1852px;top:406px;" width="32" height="32" viewBox="0 0 32 32"><path d="M10 10l12 12M22 10L10 22" stroke="#fff" stroke-width="3.4" fill="none"/></svg>
<span class="t" style="top:402.10px;font-size:30.002px;line-height:39px;color:#8c1d18;letter-spacing:0.042px;left:1896.00px;">Paused on exception</span>
<span class="t" style="top:448.50px;font-size:27.4px;line-height:36px;color:#c5221f;font-family:'DejaVu Sans Mono','Liberation Mono',monospace;left:1889.00px;">Error: Why did this</span>
<span class="t" style="top:475.50px;font-size:27.4px;line-height:36px;color:#c5221f;font-family:'DejaVu Sans Mono','Liberation Mono',monospace;left:1889.00px;">happen????</span>
<div style="left:1810px;top:533px;width:508px;height:110px;background:#f4f5fc;border-bottom:2px solid #cbdafa"></div>
<svg style="left:1835px;top:550.5px;" width="14" height="19" viewBox="0 0 14 19"><path d="M0 0l14 9.5L0 19z" fill="#474747"/></svg>
<span class="t" style="top:540.10px;font-size:30.002px;line-height:39px;color:#202124;letter-spacing:-0.228px;left:1863.00px;">Watch</span>
<svg style="left:1831px;top:608.5px;" width="19" height="13" viewBox="0 0 19 13"><path d="M0 0h19l-9.5 13z" fill="#474747"/></svg>
<span class="t" style="top:594.10px;font-size:30.002px;line-height:39px;color:#202124;letter-spacing:0.056px;left:1863.00px;">Breakpoints</span>
<div style="left:1825px;top:658px;width:30px;height:29px;border:2.5px solid #767676;border-radius:5px;background:#fff"></div>
<span class="t" style="top:652.10px;font-size:30.002px;line-height:39px;color:#202124;letter-spacing:0.136px;left:1870.00px;">Pause on uncaught exceptions</span>
<div style="left:1825px;top:703px;width:30px;height:30px;background:#1a6ff0;border-radius:5px"></div>
<svg style="left:1825px;top:703px;" width="30" height="30" viewBox="0 0 30 30"><path d="M6 15.500l6 6L24 8.500" stroke="#fff" stroke-width="4.200" fill="none"/></svg>
<span class="t" style="top:697.10px;font-size:30.002px;line-height:39px;color:#202124;letter-spacing:0.121px;left:1870.00px;">Pause on caught exceptions</span>
<div style="left:1810px;top:748px;width:508px;height:55px;background:#f4f5fc;border-bottom:2px solid #cbdafa"></div>
<svg style="left:1831px;top:768.5px;" width="19" height="13" viewBox="0 0 19 13"><path d="M0 0h19l-9.5 13z" fill="#474747"/></svg>
<span class="t" style="top:754.10px;font-size:30.002px;line-height:39px;color:#202124;left:1863.00px;">Scope</span>
<div style="left:1810px;top:802px;width:508px;height:220px;overflow:hidden"><div style="left:-1810px;top:-802px;width:2460px;height:1564px">
<svg style="left:1829px;top:824.5px;" width="19" height="13" viewBox="0 0 19 13"><path d="M0 0h19l-9.5 13z" fill="#474747"/></svg>
<span class="t" style="top:812.50px;font-size:27.4px;line-height:36px;color:#202124;font-family:'DejaVu Sans Mono','Liberation Mono',monospace;left:1861.00px;">Local</span>
<svg style="left:1852px;top:864.5px;" width="14" height="19" viewBox="0 0 14 19"><path d="M0 0l14 9.5L0 19z" fill="#474747"/></svg>
<span class="t" style="top:855.50px;font-size:27.4px;line-height:36px;color:#202124;font-family:'DejaVu Sans Mono','Liberation Mono',monospace;left:1879.00px;"><span style="color:#8a8a8a">Exception</span>: Error: Why did this happen????</span>
<span class="t" style="top:895.50px;font-size:27.4px;line-height:36px;color:#3c3c3c;font-family:'DejaVu Sans Mono','Liberation Mono',monospace;left:1881.00px;"><span style="color:#8a8a8a">this</span>: <span style="color:#a3a3a3">undefined</span></span>
<svg style="left:1832px;top:945.5px;" width="14" height="19" viewBox="0 0 14 19"><path d="M0 0l14 9.5L0 19z" fill="#474747"/></svg>
<span class="t" style="top:937.50px;font-size:27.4px;line-height:36px;color:#202124;font-family:'DejaVu Sans Mono','Liberation Mono',monospace;left:1860.00px;">Module</span>
<svg style="left:1832px;top:991.5px;" width="14" height="19" viewBox="0 0 14 19"><path d="M0 0l14 9.5L0 19z" fill="#474747"/></svg>
<span class="t" style="top:983.50px;font-size:27.4px;line-height:36px;color:#202124;font-family:'DejaVu Sans Mono','Liberation Mono',monospace;left:1860.00px;">Global</span>
<span class="t" style="top:983.50px;font-size:27.4px;line-height:36px;color:#202124;font-family:'DejaVu Sans Mono','Liberation Mono',monospace;left:2189.03px;width:118.97px;text-align:right;">Window</span>
</div></div>
<div style="left:1810px;top:1022px;width:508px;height:56px;background:#f4f5fc;border-bottom:2px solid #cbdafa"></div>
<svg style="left:1831px;top:1043.5px;" width="19" height="13" viewBox="0 0 19 13"><path d="M0 0h19l-9.5 13z" fill="#474747"/></svg>
<span class="t" style="top:1029.10px;font-size:30.002px;line-height:39px;color:#202124;left:1863.00px;">Call Stack</span>
<div style="left:1823px;top:1088px;width:30px;height:30px;background:#1a6ff0;border-radius:5px"></div>
<svg style="left:1823px;top:1088px;" width="30" height="30" viewBox="0 0 30 30"><path d="M6 15.500l6 6L24 8.500" stroke="#fff" stroke-width="4.200" fill="none"/></svg>
<span class="t" style="top:1085.10px;font-size:30.002px;line-height:39px;color:#8a8a8a;letter-spacing:0.131px;left:1863.00px;">Show ignore-listed frames</span>
<div style="left:1810px;top:1130px;width:508px;height:2px;background:#dde6fb"></div>
<span class="t" style="top:1139.50px;font-size:30.002px;line-height:39px;color:#7a7a7a;font-style:italic;letter-spacing:0.144px;left:1860.00px;">throwException</span>
<span class="t" style="top:1139.50px;font-size:30.002px;line-height:39px;color:#b3b3b3;font-style:italic;letter-spacing:-0.181px;left:2123.00px;">library.js:15</span>
<div style="left:1810px;top:1186px;width:508px;height:2px;background:#cbdafa"></div>
<span class="t" style="top:1194.40px;font-size:30.002px;line-height:39px;color:#1f1f1f;letter-spacing:-0.005px;left:1860.00px;">doWithError</span>
<span class="t" style="top:1194.40px;font-size:30.002px;line-height:39px;color:#8a8a8a;letter-spacing:0.112px;left:2094.00px;">mycode.js:18</span>
<div style="left:1810px;top:1240.2px;width:508px;height:2px;background:#cbdafa"></div>
<span class="t" style="top:1249.30px;font-size:30.002px;line-height:39px;color:#1f1f1f;letter-spacing:-0.410px;left:1860.00px;">(anonymous)</span>
<span class="t" style="top:1249.30px;font-size:30.002px;line-height:39px;color:#8a8a8a;letter-spacing:0.112px;left:2094.00px;">mycode.js:89</span>
<div style="left:1810px;top:1294.4px;width:508px;height:2px;background:#cbdafa"></div>
<span class="t" style="top:1304.20px;font-size:30.002px;line-height:39px;color:#7a7a7a;font-style:italic;letter-spacing:-0.218px;left:1860.00px;">errorWrapper</span>
<span class="t" style="top:1304.20px;font-size:30.002px;line-height:39px;color:#b3b3b3;font-style:italic;letter-spacing:-0.181px;left:2123.00px;">library.js:37</span>
<div style="left:1810px;top:1348.6px;width:508px;height:2px;background:#cbdafa"></div>
<span class="t" style="top:1359.10px;font-size:30.002px;line-height:39px;color:#1f1f1f;letter-spacing:0.382px;left:1860.00px;">onclick</span>
<span class="t" style="top:1359.10px;font-size:30.002px;line-height:39px;color:#8a8a8a;letter-spacing:-0.602px;left:2144.00px;">(index):83</span>
<svg style="left:1826px;top:1146px;" width="24" height="26" viewBox="0 0 24 26"><path d="M1 7h9V1l13 12-13 12v-6H1z" fill="#6e94e6"/></svg>
<div style="left:1810px;top:1403px;width:508px;height:14px;background:#f4f5fc"></div>
<div style="left:2318px;top:382px;width:30px;height:1034px;background:#fafafa;border-left:2px solid #ececec"></div>
<div style="left:2326px;top:385px;width:16px;height:817px;background:#c1c1c1;border-radius:8px"></div>
<div class="anno" style="left:1806px;top:687px;width:464px;height:64px;"></div>
<div class="anno" style="left:1796px;top:1017px;width:513px;height:397px;"></div>
</div></div></div>
<div id="ring"></div>
</body></html>
